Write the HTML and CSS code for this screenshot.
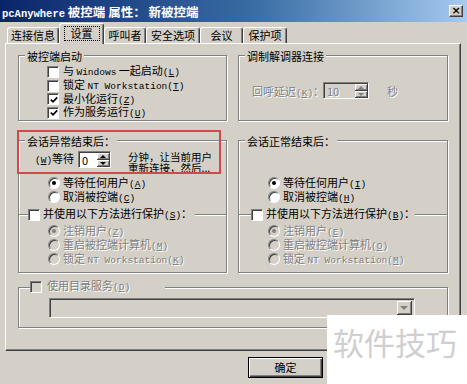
FILE: index.html
```html
<!DOCTYPE html>
<html>
<head>
<meta charset="utf-8">
<title>pcAnywhere 被控端 属性</title>
<link rel="stylesheet" href="styles.css">
</head>
<body>
<div class="window">
  <div class="titlebar">
    <span class="title"><span class="lat">pcAnywhere</span> 被控端 属性： 新被控端</span>
    <span class="close">×</span>
  </div>

  <div class="tabs">
    <span class="tab t1">连接信息</span>
    <span class="tab t2 on"><span class="focus">设置</span></span>
    <span class="tab t3">呼叫者</span>
    <span class="tab t4">安全选项</span>
    <span class="tab t5">会议</span>
    <span class="tab t6">保护项</span>
  </div>

  <div class="panel">
    <div class="cols">
      <div class="group">
        <span class="legend">被控端启动</span>
        <div class="opts">
          <div class="opt"><span class="check"></span><span class="txt">与 <span class="lat">Windows</span> 一起启动<span class="lat">(<u>L</u>)</span></span></div>
          <div class="opt"><span class="check"></span><span class="txt">锁定 <span class="lat">NT Workstation(<u>T</u>)</span></span></div>
          <div class="opt"><span class="check"><svg width="8" height="8" viewBox="0 0 8 8"><polyline points="0.8,3.6 3,5.8 7.2,1.4" fill="none" stroke="#000" stroke-width="1.7"/></svg></span><span class="txt">最小化运行<span class="lat">(<u>Z</u>)</span></span></div>
          <div class="opt"><span class="check"><svg width="8" height="8" viewBox="0 0 8 8"><polyline points="0.8,3.6 3,5.8 7.2,1.4" fill="none" stroke="#000" stroke-width="1.7"/></svg></span><span class="txt">作为服务运行<span class="lat">(<u>U</u>)</span></span></div>
        </div>
      </div>

      <div class="group">
        <span class="legend">调制解调器连接</span>
        <div class="modem-row dis">
          <span class="modem-label">回呼延迟<span class="lat">(<u>K</u>)</span>：</span>
          <span class="spin spin-k"><span class="val">10</span><span class="arrows"><span class="arr up"></span><span class="arr dn"></span></span></span>
          <span class="sec">秒</span>
        </div>
      </div>

      <div class="group">
        <span class="legend">会话异常结束后：</span>
        <div class="wait-row">
          <span class="wait-label"><span class="lat">(<u>W</u>)</span>等待</span>
          <span class="spin spin-w"><span class="val">0</span><span class="arrows"><span class="arr up"></span><span class="arr dn"></span></span></span>
          <span class="wait-msg">分钟，让当前用户<br>重新连接，然后...</span>
        </div>
        <div class="radios">
          <div class="ropt"><span class="radio on"></span><span class="txt">等待任何用户<span class="lat">(<u>A</u>)</span></span></div>
          <div class="ropt"><span class="radio"></span><span class="txt">取消被控端<span class="lat">(<u>C</u>)</span></span></div>
        </div>
        <div class="sub">
          <span class="sub-legend left"><span class="check"></span><span class="txt">并使用以下方法进行保护<span class="lat">(<u>S</u>)</span>：</span></span>
          <div class="radios sub-radios dis">
            <div class="ropt"><span class="radio on"></span><span class="txt">注销用户<span class="lat">(<u>Z</u>)</span></span></div>
            <div class="ropt"><span class="radio"></span><span class="txt">重启被控端计算机<span class="lat">(<u>M</u>)</span></span></div>
            <div class="ropt"><span class="radio"></span><span class="txt">锁定 <span class="lat">NT Workstation(<u>K</u>)</span></span></div>
          </div>
        </div>
      </div>

      <div class="group">
        <span class="legend">会话正常结束后：</span>
        <div class="radios gap-top">
          <div class="ropt"><span class="radio on"></span><span class="txt">等待任何用户<span class="lat">(<u>I</u>)</span></span></div>
          <div class="ropt"><span class="radio"></span><span class="txt">取消被控端<span class="lat">(<u>H</u>)</span></span></div>
        </div>
        <div class="sub">
          <span class="sub-legend right"><span class="check"></span><span class="txt">并使用以下方法进行保护<span class="lat">(<u>B</u>)</span>：</span></span>
          <div class="radios sub-radios dis">
            <div class="ropt"><span class="radio on"></span><span class="txt">注销用户<span class="lat">(<u>E</u>)</span></span></div>
            <div class="ropt"><span class="radio"></span><span class="txt">重启被控端计算机<span class="lat">(<u>O</u>)</span></span></div>
            <div class="ropt"><span class="radio"></span><span class="txt">锁定 <span class="lat">NT Workstation(<u>M</u>)</span></span></div>
          </div>
        </div>
      </div>
    </div>

    <div class="group dir">
      <span class="sub-legend dir-legend dis"><span class="check"></span><span class="txt">使用目录服务<span class="lat">(<u>D</u>)</span></span></span>
      <div class="combo"><span class="combo-btn"><span class="tri"></span></span></div>
    </div>
  </div>

  <div class="buttons">
    <span class="btn default">确定</span>
    <span class="btn"></span>
  </div>

  <div class="redbox"></div>
  <div class="watermark">软件技巧</div>
</div>
</body>
</html>
```

FILE: styles.css
```css
* {
  box-sizing: border-box;
}

body {
  margin: 0;
  background: #d4d0c8;
  font-family: "Noto Sans CJK SC", sans-serif;
  font-size: 11px;
  color: #000;
}

.lat {
  font-family: "Liberation Mono", "Noto Sans CJK SC", monospace;
  font-size: 9.5px;
}

.txt {
  line-height: 13px;
  white-space: nowrap;
}

.window {
  position: relative;
  width: 467px;
  height: 384px;
  overflow: hidden;
  background: #d4d0c8;
}

/* title bar */
.titlebar {
  height: 22px;
  padding: 0 4px 0 2px;
  display: flex;
  align-items: center;
  justify-content: space-between;
  background: linear-gradient(to right, #0a246a, #3a6ea5 55%, #a6caf0);
  color: #fff;
}

.title {
  font-weight: bold;
  font-size: 12.5px;
  white-space: pre;
}

.title .lat {
  font-size: 10.5px;
  font-weight: bold;
}

.close {
  width: 14px;
  height: 12px;
  background: #d4d0c8;
  border: 1px solid;
  border-color: #fff #404040 #404040 #fff;
  box-shadow: inset -1px -1px #808080;
  color: #000;
  font: bold 11px/9px "DejaVu Sans", sans-serif;
  text-align: center;
}

/* tabs */
.tabs {
  height: 21px;
  padding-left: 7px;
  display: flex;
  align-items: flex-end;
}

.tab {
  height: 16px;
  border: 1px solid;
  border-bottom: 0;
  border-color: #fff #404040 transparent #fff;
  border-radius: 3px 3px 0 0;
  box-shadow: inset -1px 0 #808080;
  text-align: center;
  line-height: 14px;
}

.tab.on {
  position: relative;
  z-index: 1;
  height: 21px;
  margin-bottom: -1px;
  padding-top: 2px;
  background: #d4d0c8;
}

.focus {
  display: inline-block;
  padding: 0 6px;
  border: 1px dotted #000;
  line-height: 13px;
}

.t1 { width: 52px; }
.t2 { width: 45px; }
.t3 { width: 42px; }
.t4 { width: 54px; }
.t5 { width: 43px; }
.t6 { width: 44px; }

/* property page */
.panel {
  width: 456px;
  height: 308px;
  margin-left: 5px;
  padding: 11px 12px 0 12px;
  border: 1px solid;
  border-color: #fff #404040 #404040 #fff;
  box-shadow: inset -1px -1px #808080;
}

.cols {
  display: grid;
  grid-template-columns: 209px 210px;
  grid-template-rows: 66px 133px;
  column-gap: 11px;
  row-gap: 19px;
}

.group {
  border: 1px solid #808080;
  box-shadow: inset 1px 1px #fff, 1px 1px #fff;
}

.legend {
  display: block;
  width: max-content;
  margin: -6px 0 0 6px;
  padding: 0 2px;
  background: #d4d0c8;
  line-height: 13px;
}

.dis {
  color: #808080;
  text-shadow: 1px 1px 0 #fff;
}

/* check boxes and radios */
.check {
  width: 12px;
  height: 12px;
  flex: none;
  display: flex;
  align-items: center;
  justify-content: center;
  background: #fff;
  border: 1px solid;
  border-color: #808080 #fff #fff #808080;
  box-shadow: inset 1px 1px #404040;
  padding: 1px 0 0 1px;
}

.radio {
  width: 12px;
  height: 12px;
  flex: none;
  display: flex;
  align-items: center;
  justify-content: center;
  border-radius: 50%;
  background: #fff;
  border: 1px solid;
  border-color: #808080 #fff #fff #808080;
  box-shadow: inset 1px 1px #404040;
}

.radio.on::after {
  content: "";
  width: 4px;
  height: 4px;
  border-radius: 50%;
  background: #000;
}

.dis .radio,
.dis .check {
  background: #d4d0c8;
}

.dis .radio.on::after {
  background: #808080;
}

.opts {
  margin-top: 2px;
  padding-left: 28px;
}

.opt {
  height: 13.7px;
  display: flex;
  align-items: center;
  gap: 4px;
}

.radios {
  margin-top: 4px;
  padding-left: 29px;
}

.radios.gap-top {
  margin-top: 28px;
}

.ropt {
  height: 14px;
  display: flex;
  align-items: center;
  gap: 3px;
}

/* modem */
.modem-row {
  margin-top: 19px;
  padding-left: 13px;
  display: flex;
  align-items: center;
}

.modem-label {
  width: 71px;
  white-space: nowrap;
}

.sec {
  margin-left: 18px;
}

/* spin boxes */
.spin {
  height: 17px;
  display: flex;
  padding: 1px 0 0 1px;
  background: #fff;
  border: 1px solid;
  border-color: #808080 #fff #fff #808080;
  box-shadow: inset 1px 1px #404040;
}

.spin-k {
  width: 46px;
  background: #d4d0c8;
}

.spin-w {
  width: 33px;
}

.val {
  flex: 1;
  padding-left: 2px;
  line-height: 14px;
}

.arrows {
  width: 13px;
  display: flex;
  flex-direction: column;
}

.arr {
  flex: 1;
  display: flex;
  align-items: center;
  justify-content: center;
  background: #d4d0c8;
  border-right: 1px solid #404040;
  border-bottom: 1px solid #404040;
  box-shadow: inset 1px 1px #fff, inset -1px -1px #808080;
}

.arr::after {
  content: "";
  border-left: 3px solid transparent;
  border-right: 3px solid transparent;
}

.arr.up::after {
  border-bottom: 3px solid #000;
}

.arr.dn::after {
  border-top: 3px solid #000;
}

.dis .arr.up::after {
  border-bottom-color: #808080;
}

.dis .arr.dn::after {
  border-top-color: #808080;
}

/* wait row */
.wait-row {
  height: 21px;
  margin-top: 3px;
  padding-left: 16px;
  display: flex;
  align-items: flex-start;
}

.wait-label {
  width: 43px;
  line-height: 15px;
  white-space: nowrap;
}

.wait-msg {
  margin: 0 0 0 17px;
  font-size: 10.5px;
  line-height: 11px;
  white-space: nowrap;
}

/* nested check box groups */
.sub {
  margin-top: 10px;
  border-top: 1px solid #808080;
  box-shadow: inset 0 1px #fff;
}

.sub-legend {
  display: flex;
  align-items: center;
  gap: 3px;
  height: 13px;
  margin-top: -7px;
  background: #d4d0c8;
}

.sub-legend.left {
  width: 167px;
  margin-left: 9px;
}

.sub-legend.right {
  width: 164px;
  margin-left: 12px;
}

.sub-radios {
  margin-top: 3px;
}

/* directory service */
.dir {
  height: 41px;
  margin-top: 14px;
}

.dir-legend {
  width: 135px;
  margin: -8px 0 0 11px;
  gap: 5px;
}

.combo {
  width: 366px;
  height: 20px;
  margin: 5px 0 0 30px;
  padding: 2px;
  display: flex;
  justify-content: flex-end;
  background: #d4d0c8;
  border: 1px solid;
  border-color: #808080 #fff #fff #808080;
  box-shadow: inset 1px 1px #404040;
}

.combo-btn {
  width: 15px;
  display: flex;
  align-items: center;
  justify-content: center;
  border-right: 1px solid #404040;
  border-bottom: 1px solid #404040;
  box-shadow: inset 1px 1px #fff, inset -1px -1px #808080;
}

.tri {
  border-left: 4px solid transparent;
  border-right: 4px solid transparent;
  border-top: 4px solid #808080;
}

/* dialog buttons */
.buttons {
  margin-top: 6px;
  padding-left: 248px;
  display: flex;
  gap: 4px;
}

.btn {
  width: 75px;
  height: 21px;
  text-align: center;
  line-height: 19px;
  border: 1px solid;
  border-color: #fff #404040 #404040 #fff;
  box-shadow: inset -1px -1px #808080;
}

.btn.default {
  border-color: #000;
  box-shadow: inset 1px 1px #fff, inset -1px -1px #404040, inset -2px -2px #808080;
}

/* annotation and watermark on top of the screenshot */
.redbox {
  position: absolute;
  left: 17px;
  top: 130px;
  width: 204px;
  height: 44px;
  border: 2px solid #cf4a4a;
}

.watermark {
  position: absolute;
  left: 327px;
  top: 315px;
  width: 140px;
  height: 69px;
  padding: 7px 0 0 6px;
  background: #fff;
  color: #cfcfcf;
  font-size: 31px;
  line-height: 40px;
  white-space: nowrap;
}
```
